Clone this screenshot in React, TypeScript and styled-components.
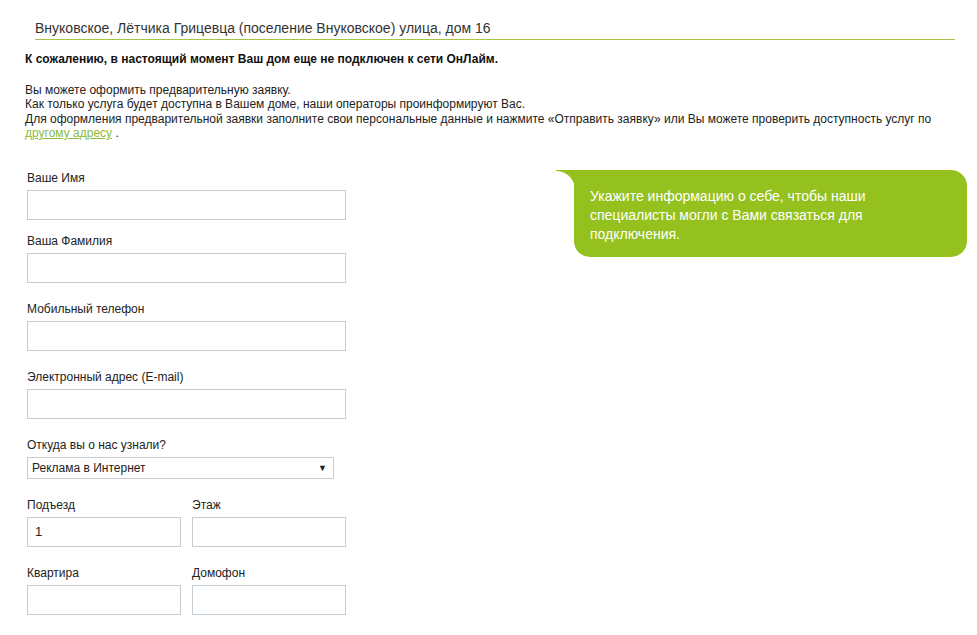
import React from "react";
import styled, { createGlobalStyle } from "styled-components";

const GlobalStyle = createGlobalStyle`
  html, body { margin: 0; padding: 0; background: #fff; }
  body { font-family: Arial, "Liberation Sans", sans-serif; color: #222; }
  * { box-sizing: border-box; }
`;

const Page = styled.div`
  width: 977px;
  padding: 20px 10px 0 25px;
`;

const AddressHeader = styled.div`
  margin: 0 12px 0 10px;
  padding-bottom: 2px;
  border-bottom: 1px solid #a3c446;
  font-size: 14px;
  line-height: 17px;
  color: #333;
`;

const Warning = styled.p`
  margin: 12px 0 0;
  font-size: 12px;
  line-height: 15px;
  font-weight: bold;
  color: #111;
`;

const Info = styled.p`
  margin: 16px 0 0;
  font-size: 12px;
  line-height: 14.4px;
  color: #222;
`;

const Link = styled.a`
  color: #8cbc3c;
  text-decoration: underline;
`;

const FormRow = styled.div`
  display: flex;
  align-items: flex-start;
  margin-top: 29px;
`;

const Form = styled.form`
  width: 321px;
  padding-left: 2px;
  display: flex;
  flex-direction: column;
`;

const Field = styled.div<{ $gap: number }>`
  display: flex;
  flex-direction: column;
  margin-bottom: ${(p) => p.$gap}px;
`;

const Label = styled.label`
  font-size: 12px;
  line-height: 17px;
  color: #222;
  margin-bottom: 3px;
`;

const TextInput = styled.input<{ $w?: number }>`
  width: ${(p) => p.$w ?? 319}px;
  height: 30px;
  border: 1px solid #c4cdd4;
  background: #fff;
  padding: 0 7px;
  font-family: Arial, "Liberation Sans", sans-serif;
  font-size: 13px;
  color: #222;
  outline: none;
`;

const SelectWrap = styled.div`
  position: relative;
  width: 307px;
  height: 22px;
`;

const Select = styled.select`
  appearance: none;
  -webkit-appearance: none;
  width: 100%;
  height: 22px;
  border: 1px solid #c4cdd4;
  background: #fff;
  padding: 0 0 0 4px;
  font-family: Arial, "Liberation Sans", sans-serif;
  font-size: 12px;
  color: #222;
  border-radius: 0;
  outline: none;
`;

const Arrow = styled.span`
  position: absolute;
  right: 7px;
  top: 5px;
  font-size: 9px;
  line-height: 12px;
  color: #222;
  pointer-events: none;
`;

const Pair = styled.div`
  display: flex;
  gap: 11px;
`;

const Bubble = styled.aside`
  position: relative;
  margin-left: auto;
  margin-top: 0;
  width: 393px;
  padding: 17px 20px 13px 16px;
  background: #95c11f;
  border-radius: 0 16px 16px 16px;
  color: #fff;
  font-size: 14px;
  line-height: 19px;

  &::before {
    content: "";
    position: absolute;
    left: -18px;
    top: 0;
    width: 19px;
    height: 20px;
    background: radial-gradient(circle at 0 100%, transparent 18.5px, #95c11f 19.5px);
  }
`;

export default function App() {
  return (
    <>
      <GlobalStyle />
      <Page>
        <AddressHeader>
          Внуковское, Лётчика Грицевца (поселение Внуковское) улица, дом 16
        </AddressHeader>
        <Warning>К сожалению, в настоящий момент Ваш дом еще не подключен к сети ОнЛайм.</Warning>
        <Info>
          Вы можете оформить предварительную заявку.
          <br />
          Как только услуга будет доступна в Вашем доме, наши операторы проинформируют Вас.
          <br />
          Для оформления предварительной заявки заполните свои персональные данные и нажмите «Отправить заявку» или Вы можете проверить доступность услуг по
          <br />
          <Link href="#">другому адресу</Link> .
        </Info>
        <FormRow>
          <Form onSubmit={(e) => e.preventDefault()}>
            <Field $gap={13}>
              <Label>Ваше Имя</Label>
              <TextInput />
            </Field>
            <Field $gap={18}>
              <Label>Ваша Фамилия</Label>
              <TextInput />
            </Field>
            <Field $gap={18}>
              <Label>Мобильный телефон</Label>
              <TextInput />
            </Field>
            <Field $gap={18}>
              <Label>Электронный адрес (E-mail)</Label>
              <TextInput />
            </Field>
            <Field $gap={18}>
              <Label>Откуда вы о нас узнали?</Label>
              <SelectWrap>
                <Select defaultValue="ad">
                  <option value="ad">Реклама в Интернет</option>
                </Select>
                <Arrow>▼</Arrow>
              </SelectWrap>
            </Field>
            <Pair>
              <Field $gap={18}>
                <Label>Подъезд</Label>
                <TextInput $w={154} defaultValue="1" />
              </Field>
              <Field $gap={18}>
                <Label>Этаж</Label>
                <TextInput $w={154} />
              </Field>
            </Pair>
            <Pair>
              <Field $gap={18}>
                <Label>Квартира</Label>
                <TextInput $w={154} />
              </Field>
              <Field $gap={18}>
                <Label>Домофон</Label>
                <TextInput $w={154} />
              </Field>
            </Pair>
          </Form>
          <Bubble>
            Укажите информацию о себе, чтобы наши специалисты могли с Вами связаться для подключения.
          </Bubble>
        </FormRow>
      </Page>
    </>
  );
}
